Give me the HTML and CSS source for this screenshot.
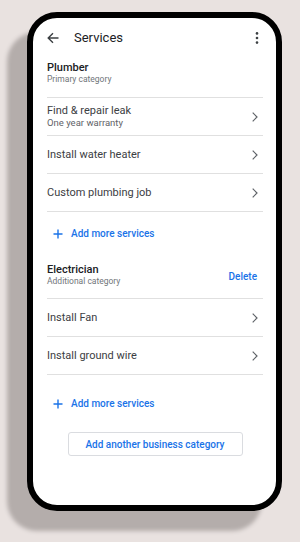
FILE: index.html
```html
<!DOCTYPE html>
<html>
<head>
<meta charset="utf-8">
<link rel="stylesheet" href="styles.css">
</head>
<body>
<div class="phone">
  <div class="screen">
    <div class="appbar">
      <svg class="back" width="12" height="12" viewBox="0 0 12 12"><path d="M11.5 6H1.2M6 1.2L1.2 6 6 10.8" fill="none" stroke="#3c4043" stroke-width="1.4"/></svg>
      <span class="title">Services</span>
      <svg class="kebab" width="12" height="12" viewBox="0 0 12 12"><circle cx="6" cy="1.4" r="1.3" fill="#3c4043"/><circle cx="6" cy="6" r="1.3" fill="#3c4043"/><circle cx="6" cy="10.6" r="1.3" fill="#3c4043"/></svg>
    </div>

    <div class="cat">
      <div class="cat-text">
        <div class="cat-name">Plumber</div>
        <div class="cat-sub">Primary category</div>
      </div>
    </div>
    <div class="row row-two">
      <div class="row-text">
        <div class="row-title">Find &amp; repair leak</div>
        <div class="row-sub">One year warranty</div>
      </div>
      <svg class="chev" width="6" height="10" viewBox="0 0 6 10"><path d="M0.7 0.7L5 5 0.7 9.3" fill="none" stroke="#5f6368" stroke-width="1.2"/></svg>
    </div>
    <div class="row">
      <div class="row-title">Install water heater</div>
      <svg class="chev" width="6" height="10" viewBox="0 0 6 10"><path d="M0.7 0.7L5 5 0.7 9.3" fill="none" stroke="#5f6368" stroke-width="1.2"/></svg>
    </div>
    <div class="row">
      <div class="row-title">Custom plumbing job</div>
      <svg class="chev" width="6" height="10" viewBox="0 0 6 10"><path d="M0.7 0.7L5 5 0.7 9.3" fill="none" stroke="#5f6368" stroke-width="1.2"/></svg>
    </div>
    <div class="add">
      <svg class="plus" width="10" height="10" viewBox="0 0 10 10"><path d="M5 0.5V9.5M0.5 5H9.5" fill="none" stroke="#1a73e8" stroke-width="1.4"/></svg>
      <span>Add more services</span>
    </div>

    <div class="cat cat2">
      <div class="cat-text">
        <div class="cat-name">Electrician</div>
        <div class="cat-sub">Additional category</div>
      </div>
      <span class="delete">Delete</span>
    </div>
    <div class="row">
      <div class="row-title">Install Fan</div>
      <svg class="chev" width="6" height="10" viewBox="0 0 6 10"><path d="M0.7 0.7L5 5 0.7 9.3" fill="none" stroke="#5f6368" stroke-width="1.2"/></svg>
    </div>
    <div class="row">
      <div class="row-title">Install ground wire</div>
      <svg class="chev" width="6" height="10" viewBox="0 0 6 10"><path d="M0.7 0.7L5 5 0.7 9.3" fill="none" stroke="#5f6368" stroke-width="1.2"/></svg>
    </div>
    <div class="add add2">
      <svg class="plus" width="10" height="10" viewBox="0 0 10 10"><path d="M5 0.5V9.5M0.5 5H9.5" fill="none" stroke="#1a73e8" stroke-width="1.4"/></svg>
      <span>Add more services</span>
    </div>
    <div class="btn-wrap">
      <div class="btn">Add another business category</div>
    </div>
  </div>
</div>
</body>
</html>
```

FILE: styles.css
```css
html, body {
  margin: 0;
  padding: 0;
}
body {
  width: 300px;
  height: 542px;
  overflow: hidden;
  background: #e9e2e0;
  font-family: Roboto, "Liberation Sans", sans-serif;
}
.phone {
  box-sizing: border-box;
  margin: 12px 0 0 27px;
  width: 255px;
  height: 499px;
  border: 6px solid #000;
  border-radius: 30px;
  background: #fff;
  box-shadow: -20px 20px 4px #b4adab;
  overflow: hidden;
}
.screen {
  padding: 0 13px 0 14px;
}
.appbar {
  height: 38px;
  display: flex;
  align-items: center;
}
.back {
  display: block;
  margin-top: 1px;
}
.title {
  margin-left: 15px;
  font-size: 13px;
  color: #202124;
}
.kebab {
  display: block;
  margin-left: auto;
  margin-top: 1px;
}
.cat {
  display: flex;
  align-items: center;
  padding: 5px 0 12px;
  border-bottom: 1px solid #e0e0e0;
}
.cat2 {
  padding: 6px 0 11px;
}
.cat-name {
  font-size: 11px;
  line-height: 13px;
  font-weight: 500;
  color: #202124;
}
.cat-sub {
  font-size: 8.5px;
  line-height: 11px;
  color: #70757a;
}
.delete {
  margin-left: auto;
  margin-right: 6px;
  margin-top: 2px;
  font-size: 10px;
  font-weight: 500;
  color: #1a73e8;
}
.row {
  height: 37px;
  display: flex;
  align-items: center;
  border-bottom: 1px solid #e0e0e0;
}
.row-title {
  font-size: 11px;
  line-height: 13px;
  color: #3c4043;
}
.row-sub {
  font-size: 9.5px;
  line-height: 12px;
  color: #5f6368;
}
.chev {
  display: block;
  margin-left: auto;
  margin-right: 5px;
}
.add {
  display: flex;
  align-items: center;
  padding: 16px 0 17px 6px;
  font-size: 10px;
  line-height: 12px;
  font-weight: 500;
  color: #1a73e8;
}
.plus {
  display: block;
  margin-right: 8px;
}
.add2 {
  padding: 23px 0 22px 6px;
}
.btn-wrap {
  display: flex;
  justify-content: center;
}
.btn {
  box-sizing: border-box;
  width: 175px;
  height: 24px;
  border: 1px solid #dadce0;
  border-radius: 3px;
  display: flex;
  align-items: center;
  justify-content: center;
  font-size: 10px;
  font-weight: 500;
  color: #1a73e8;
}
```
